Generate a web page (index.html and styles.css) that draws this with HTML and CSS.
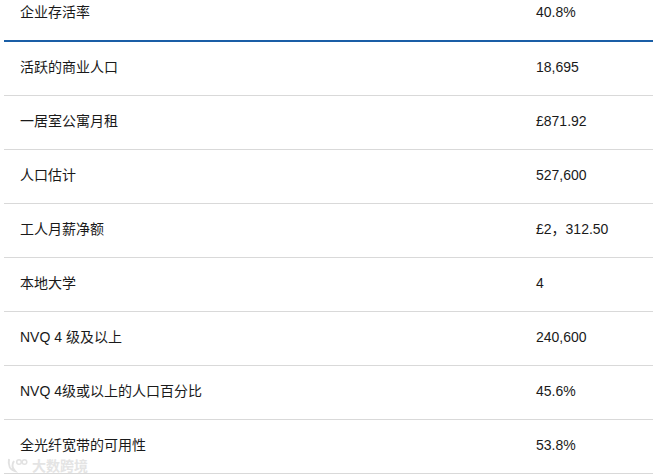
FILE: index.html
```html
<!DOCTYPE html>
<html lang="zh">
<head>
<meta charset="utf-8">
<link rel="stylesheet" href="styles.css">
</head>
<body>
<div class="table">
  <div class="row first"><div class="label">企业存活率</div><div class="value">40.8%</div></div>
  <div class="row"><div class="label">活跃的商业人口</div><div class="value">18,695</div></div>
  <div class="row"><div class="label">一居室公寓月租</div><div class="value">£871.92</div></div>
  <div class="row"><div class="label">人口估计</div><div class="value">527,600</div></div>
  <div class="row"><div class="label">工人月薪净额</div><div class="value">£2，312.50</div></div>
  <div class="row"><div class="label">本地大学</div><div class="value">4</div></div>
  <div class="row"><div class="label">NVQ 4 级及以上</div><div class="value">240,600</div></div>
  <div class="row"><div class="label">NVQ 4级或以上的人口百分比</div><div class="value">45.6%</div></div>
  <div class="row"><div class="label">全光纤宽带的可用性</div><div class="value">53.8%</div></div>
</div>
<div class="watermark">
  <svg width="22" height="16" viewBox="0 0 22 16"><path d="M3 2 C2 8 4 13 9 14 C6 11 6 7 8 4" fill="none" stroke="#e2e2e2" stroke-width="2"/><circle cx="13" cy="5" r="2.3" fill="none" stroke="#e2e2e2" stroke-width="1.5"/><circle cx="18.5" cy="5" r="2.3" fill="none" stroke="#e2e2e2" stroke-width="1.5"/></svg>
  <span>大数跨境</span>
</div>
</body>
</html>
```
FILE: styles.css
```css
html, body {
  margin: 0;
  padding: 0;
  background: #ffffff;
  overflow: hidden;
}
body {
  font-family: "Liberation Sans", Arial, "Noto Sans CJK SC", sans-serif;
  font-size: 14px;
  color: #1a1a1a;
  position: relative;
  height: 474px;
}
.table {
  margin: -13px 0 0 4px;
}
.row {
  display: grid;
  grid-template-columns: 532px 1fr;
  align-items: center;
  height: 50px;
  padding-bottom: 3px;
  line-height: 16px;
  border-bottom: 1px solid #d9d9d9;
}
.row.first {
  border-bottom: 2px solid #1a5ea6;
}
.label {
  padding-left: 16px;
}
.watermark {
  position: absolute;
  left: 6px;
  top: 457px;
  display: flex;
  align-items: center;
  gap: 4px;
  color: #e4e4e4;
  font-family: "Noto Sans CJK SC", sans-serif;
  font-size: 14px;
  font-weight: 700;
  line-height: 16px;
}
```
